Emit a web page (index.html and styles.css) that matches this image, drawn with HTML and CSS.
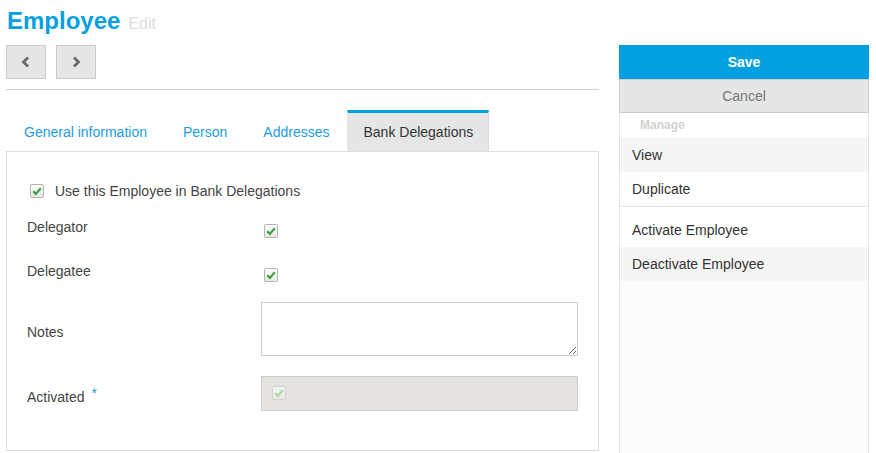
FILE: index.html
```html
<!DOCTYPE html>
<html>
<head>
<meta charset="utf-8">
<link rel="stylesheet" href="styles.css">
</head>
<body>
<div class="header">
  <span class="title">Employee</span><span class="subtitle">Edit</span>
</div>
<div class="page">
  <div class="main">
    <div class="nav">
      <button class="navbtn"><svg width="10" height="12" viewBox="0 0 10 12"><path d="M7 1.5 L2.5 6 L7 10.5" fill="none" stroke="#6b6b6b" stroke-width="2.8"/></svg></button>
      <button class="navbtn"><svg width="10" height="12" viewBox="0 0 10 12"><path d="M3 1.5 L7.5 6 L3 10.5" fill="none" stroke="#6b6b6b" stroke-width="2.8"/></svg></button>
    </div>
    <div class="rule"></div>
    <div class="tabs">
      <div class="tab">General information</div>
      <div class="tab">Person</div>
      <div class="tab">Addresses</div>
      <div class="tab active">Bank Delegations</div>
    </div>
    <div class="panel">
      <div class="userow">
        <span class="cb"><svg width="12" height="12" viewBox="0 0 12 12"><path d="M2.2 6.3 L4.8 8.9 L9.8 3.3" fill="none" stroke="#3ca23c" stroke-width="2.2"/></svg></span>
        <span class="uselabel">Use this Employee in Bank Delegations</span>
      </div>
      <div class="row row-cb first">
        <div class="label">Delegator</div>
        <div class="field"><span class="cb"><svg width="12" height="12" viewBox="0 0 12 12"><path d="M2.2 6.3 L4.8 8.9 L9.8 3.3" fill="none" stroke="#3ca23c" stroke-width="2.2"/></svg></span></div>
      </div>
      <div class="row row-cb">
        <div class="label">Delegatee</div>
        <div class="field"><span class="cb"><svg width="12" height="12" viewBox="0 0 12 12"><path d="M2.2 6.3 L4.8 8.9 L9.8 3.3" fill="none" stroke="#3ca23c" stroke-width="2.2"/></svg></span></div>
      </div>
      <div class="row row-notes">
        <div class="label">Notes</div>
        <div class="field"><textarea class="notes"></textarea></div>
      </div>
      <div class="row row-act">
        <div class="label">Activated <span class="req">*</span></div>
        <div class="field"><div class="disabled-input"><span class="cb cb-dis"><svg width="12" height="12" viewBox="0 0 12 12"><path d="M2.2 6.3 L4.8 8.9 L9.8 3.3" fill="none" stroke="#a9d6a3" stroke-width="2.2"/></svg></span></div></div>
      </div>
    </div>
  </div>
  <div class="side">
    <button class="save">Save</button>
    <button class="cancel">Cancel</button>
    <div class="manage">Manage</div>
    <div class="item shaded">View</div>
    <div class="item">Duplicate</div>
    <div class="sep"></div>
    <div class="item">Activate Employee</div>
    <div class="item shaded">Deactivate Employee</div>
    <div class="rest"></div>
  </div>
</div>
</body>
</html>
```
FILE: styles.css
```css
* { box-sizing: border-box; }
html, body { margin: 0; padding: 0; background: #fff; }
body {
  font-family: "Liberation Sans", Arial, sans-serif;
  font-size: 14px;
  color: #444;
  width: 876px;
  height: 453px;
  overflow: hidden;
}
.header {
  padding: 7px 0 0 7px;
  height: 45px;
  line-height: 28px;
}
.title {
  font-size: 24px;
  font-weight: bold;
  color: #079fdf;
}
.subtitle {
  font-size: 16px;
  color: #dcdcdc;
  margin-left: 8px;
}
.page {
  display: flex;
  gap: 20px;
  padding-left: 6px;
}
.main {
  width: 593px;
}
.nav {
  display: flex;
  gap: 10px;
  height: 34px;
}
.navbtn {
  width: 40px;
  height: 34px;
  background: #e6e6e6;
  border: 1px solid #cbcbcb;
  padding: 0;
  display: flex;
  align-items: center;
  justify-content: center;
}
.rule {
  margin-top: 10px;
  height: 1px;
  background: #cfcfcf;
}
.tabs {
  margin-top: 20px;
  display: flex;
  height: 41px;
}
.tab {
  border-top: 3px solid transparent;
  border-left: 1px solid transparent;
  border-right: 1px solid transparent;
  padding: 0 17px;
  line-height: 38px;
  color: #1c9ce0;
}
.tab.active {
  padding: 0 15px;
  border-top-color: #009fe0;
  border-left-color: #e2e2e2;
  border-right-color: #dcdcdc;
  background: #e6e6e6;
  color: #333;
}
.panel {
  border: 1px solid #dedede;
  height: 300px;
  padding: 29px 20px 0 20px;
}
.userow {
  display: flex;
  align-items: center;
  height: 20px;
}
.userow .cb { margin-left: 3px; }
.uselabel {
  margin-left: 11px;
  color: #444;
}
.cb {
  display: inline-flex;
  align-items: center;
  justify-content: center;
  width: 14px;
  height: 14px;
  border: 1px solid #b3b3b3;
  border-radius: 2px;
  background: linear-gradient(#fdfdfd, #e8e8e8);
}
.cb-dis {
  border-color: #d0d0d0;
  background: linear-gradient(#f3f3f1, #e9e8e5);
}
.row {
  display: grid;
  grid-template-columns: 234px 317px;
}
.row.first { margin-top: 13px; }
.row-cb {
  height: 34px;
  margin-bottom: 10px;
}
.row-cb .label { padding-top: 3px; line-height: 20px; }
.row-cb .field { padding-top: 10px; padding-left: 3px; }
.row-notes {
  align-items: center;
  margin-bottom: 20px;
}
.row-notes .label { padding-top: 5px; }
.row-act .label { padding-top: 2px; }
.notes {
  display: block;
  width: 317px;
  height: 54px;
  border: 1px solid #cdcdcd;
  margin: 0;
  resize: vertical;
  background: #fff;
}
.row-act { align-items: center; }
.disabled-input {
  width: 317px;
  height: 35px;
  border: 1px solid #cdcdcd;
  background: #e5e3df;
  padding: 9px 0 0 10px;
}
.req {
  color: #1c9ce0;
  vertical-align: 4px;
  margin-left: 3px;
}
.side {
  width: 250px;
  height: 408px;
  display: flex;
  flex-direction: column;
  border-left: 1px solid #e4e4e4;
  border-right: 1px solid #e4e4e4;
  background: #fcfcfd;
}
.save {
  height: 34px;
  margin: 0 -1px;
  border: 0;
  background: #009fe0;
  color: #fff;
  font-family: "Liberation Sans", Arial, sans-serif;
  font-size: 14px;
  font-weight: bold;
}
.cancel {
  height: 34px;
  margin: 0 -1px;
  border: 1px solid #cdcdcd;
  background: #e6e6e6;
  color: #777;
  font-family: "Liberation Sans", Arial, sans-serif;
  font-size: 14px;
}
.manage {
  height: 25px;
  line-height: 25px;
  padding-left: 20px;
  font-size: 12px;
  font-weight: bold;
  color: #d2d2d2;
  background: #fff;
}
.item {
  height: 34px;
  line-height: 34px;
  padding-left: 12px;
  color: #333;
  background: #fff;
}
.item.shaded { background: #f5f5f5; }
.sep {
  height: 7px;
  border-top: 1px solid #e4e4e4;
  background: #fff;
}
.rest { flex: 1; }
```
